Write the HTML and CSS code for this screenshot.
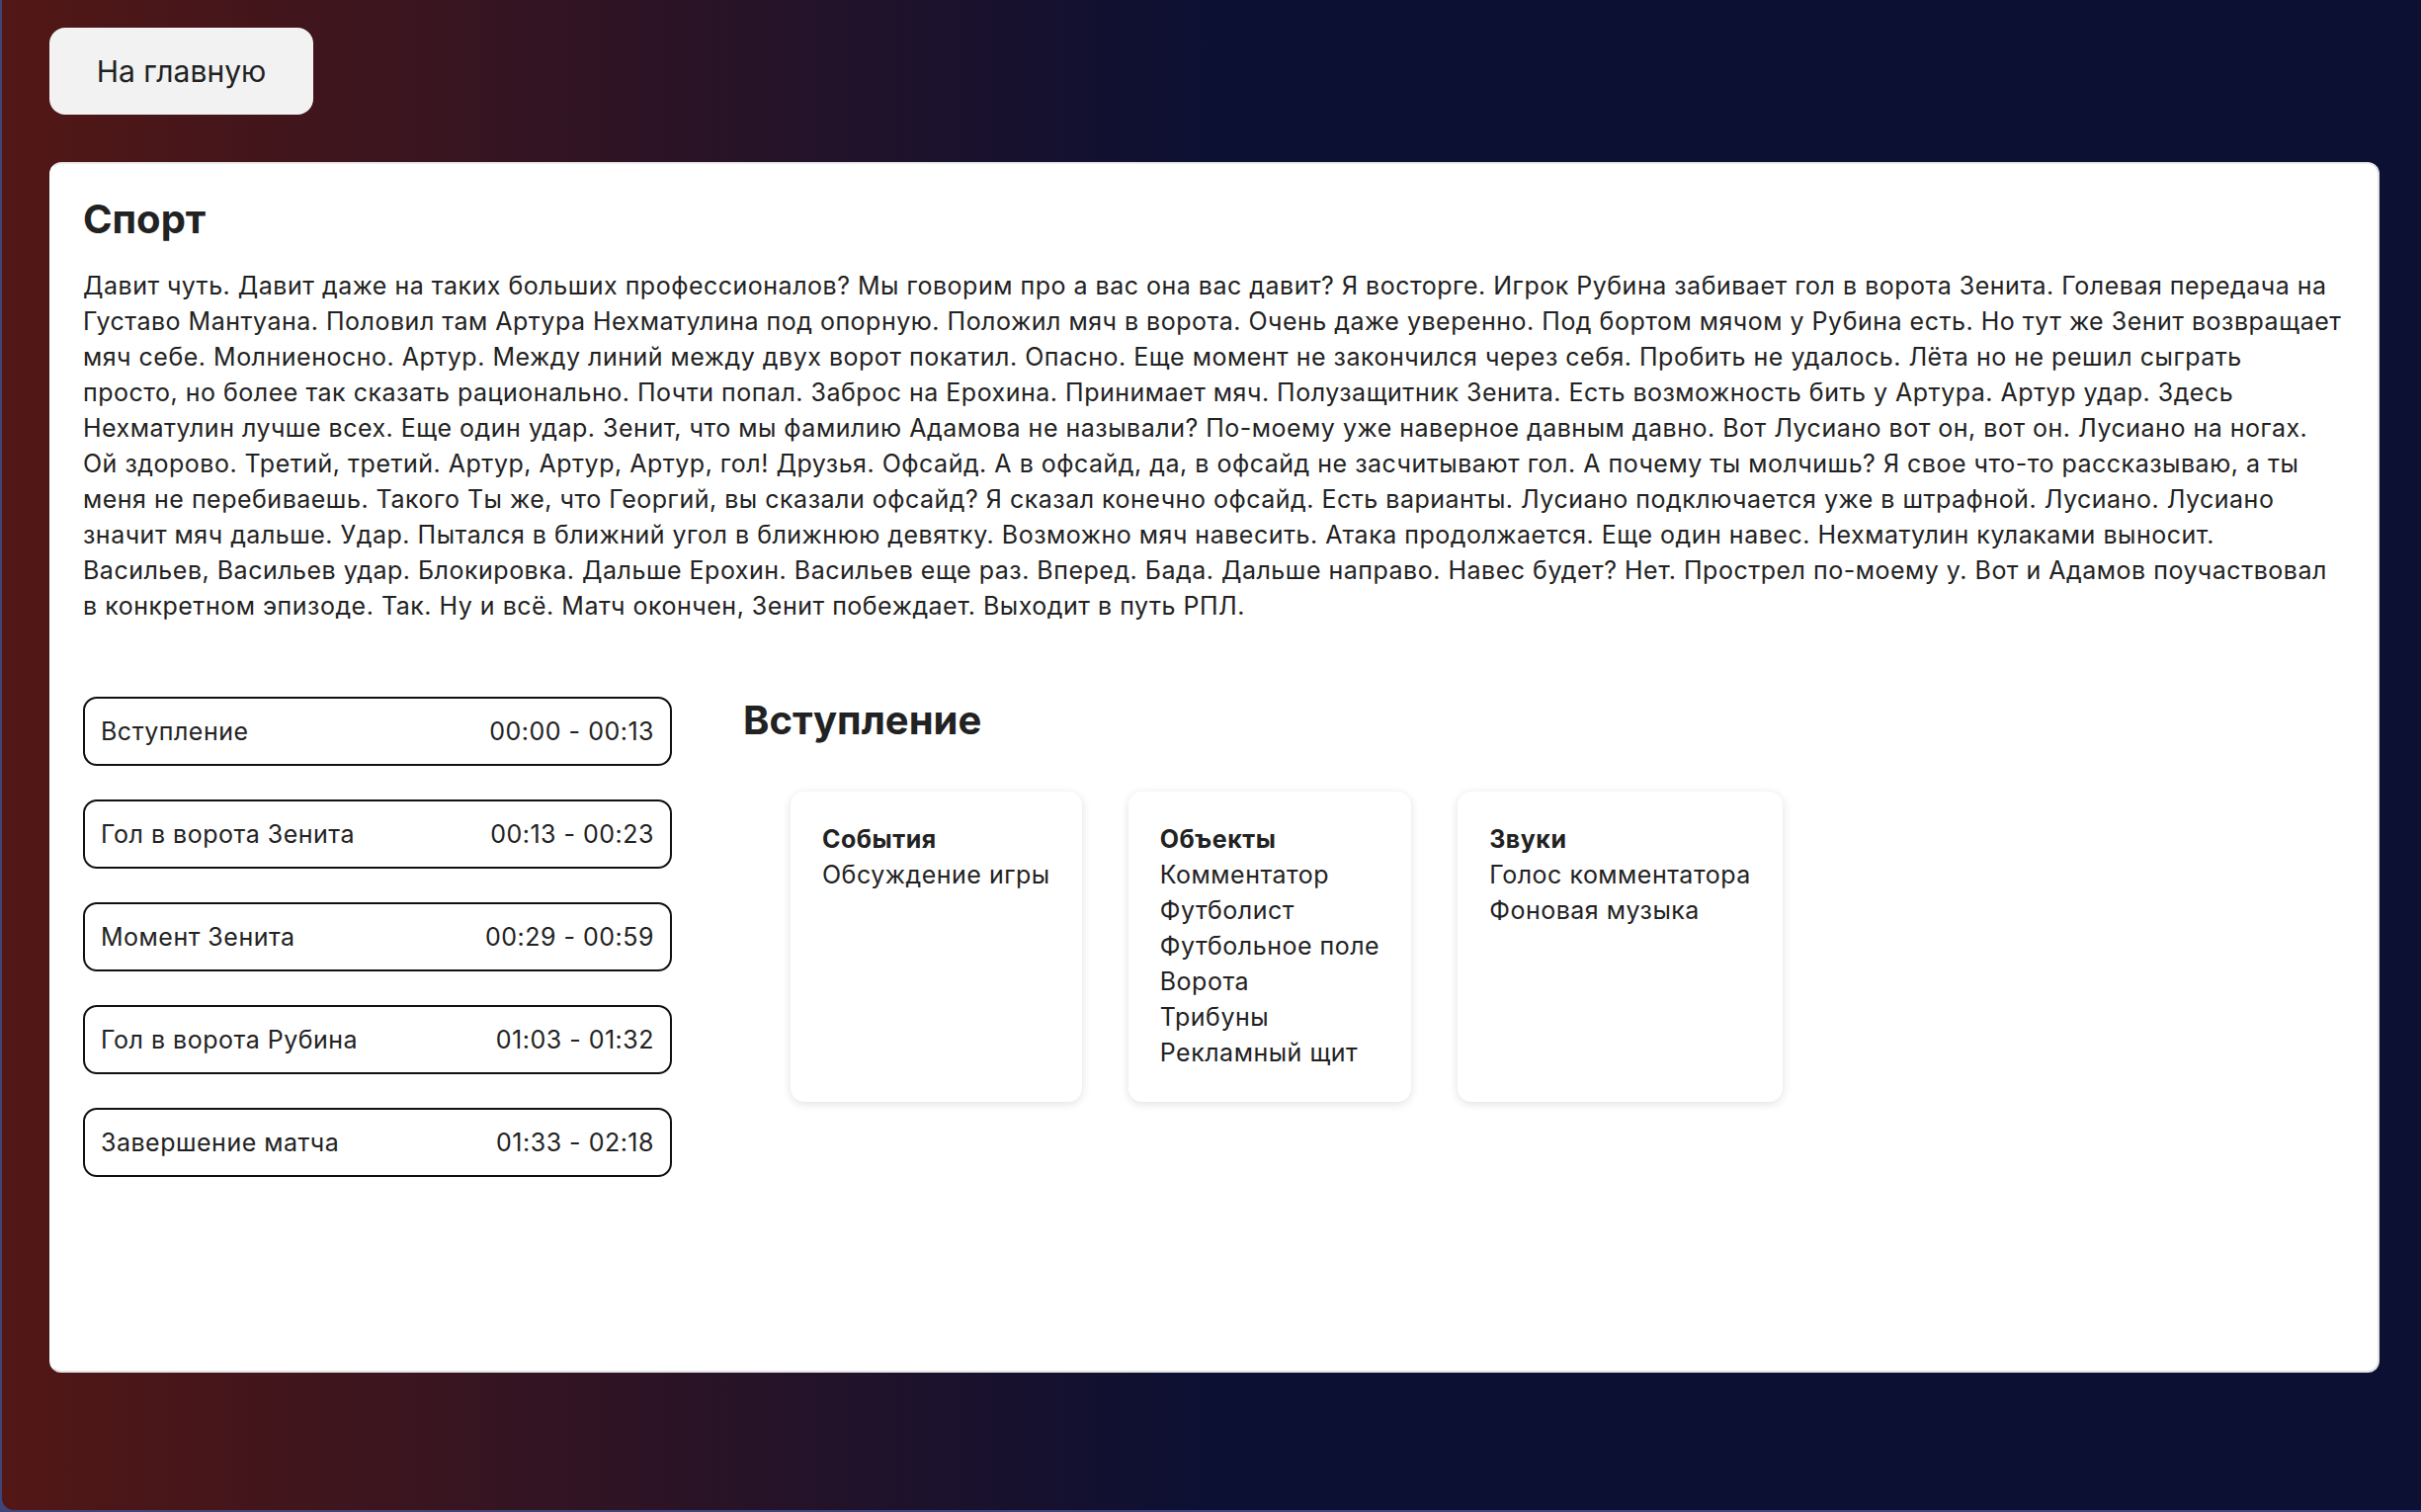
FILE: index.html
```html
<!DOCTYPE html>
<html lang="ru">
<head>
<meta charset="utf-8">
<title>Спорт</title>
<link rel="stylesheet" href="styles.css">
</head>
<body>
<div class="app">
  <button class="home-btn">На главную</button>
  <main class="card">
    <h1 class="title">Спорт</h1>
    <p class="transcript">Давит чуть. Давит даже на таких больших профессионалов? Мы говорим про а вас она вас давит? Я восторге. Игрок Рубина забивает гол в ворота Зенита. Голевая передача на Густаво Мантуана. Половил там Артура Нехматулина под опорную. Положил мяч в ворота. Очень даже уверенно. Под бортом мячом у Рубина есть. Но тут же Зенит возвращает мяч себе. Молниеносно. Артур. Между линий между двух ворот покатил. Опасно. Еще момент не закончился через себя. Пробить не удалось. Лёта но не решил сыграть просто, но более так сказать рационально. Почти попал. Заброс на Ерохина. Принимает мяч. Полузащитник Зенита. Есть возможность бить у Артура. Артур удар. Здесь Нехматулин лучше всех. Еще один удар. Зенит, что мы фамилию Адамова не называли? По-моему уже наверное давным давно. Вот Лусиано вот он, вот он. Лусиано на ногах. Ой здорово. Третий, третий. Артур, Артур, Артур, гол! Друзья. Офсайд. А в офсайд, да, в офсайд не засчитывают гол. А почему ты молчишь? Я свое что-то рассказываю, а ты меня не перебиваешь. Такого Ты же, что Георгий, вы сказали офсайд? Я сказал конечно офсайд. Есть варианты. Лусиано подключается уже в штрафной. Лусиано. Лусиано значит мяч дальше. Удар. Пытался в ближний угол в ближнюю девятку. Возможно мяч навесить. Атака продолжается. Еще один навес. Нехматулин кулаками выносит. Васильев, Васильев удар. Блокировка. Дальше Ерохин. Васильев еще раз. Вперед. Бада. Дальше направо. Навес будет? Нет. Прострел по-моему у. Вот и Адамов поучаствовал в конкретном эпизоде. Так. Ну и всё. Матч окончен, Зенит побеждает. Выходит в путь РПЛ.</p>
    <div class="details">
      <ul class="segments">
        <li class="segment"><span>Вступление</span><span>00:00 - 00:13</span></li>
        <li class="segment"><span>Гол в ворота Зенита</span><span>00:13 - 00:23</span></li>
        <li class="segment"><span>Момент Зенита</span><span>00:29 - 00:59</span></li>
        <li class="segment"><span>Гол в ворота Рубина</span><span>01:03 - 01:32</span></li>
        <li class="segment"><span>Завершение матча</span><span>01:33 - 02:18</span></li>
      </ul>
      <section class="segment-info">
        <h2 class="segment-title">Вступление</h2>
        <div class="tags">
          <div class="tag-card">
            <div class="tag-head">События</div>
            <div>Обсуждение игры</div>
          </div>
          <div class="tag-card">
            <div class="tag-head">Объекты</div>
            <div>Комментатор</div>
            <div>Футболист</div>
            <div>Футбольное поле</div>
            <div>Ворота</div>
            <div>Трибуны</div>
            <div>Рекламный щит</div>
          </div>
          <div class="tag-card">
            <div class="tag-head">Звуки</div>
            <div>Голос комментатора</div>
            <div>Фоновая музыка</div>
          </div>
        </div>
      </section>
    </div>
  </main>
</div>
</body>
</html>
```

FILE: styles.css
```css
* { box-sizing: border-box; }
html, body {
  margin: 0;
  padding: 0;
}
body {
  background: #3f4579;
  font-family: "Inter", "Noto Sans", sans-serif;
  color: #222;
}
.app {
  margin-left: 2px;
  height: 1528px;
  border-bottom-left-radius: 12px;
  background: linear-gradient(90deg, #521715 0%, #0c1033 50%, #0c1033 100%);
  padding: 28px 42px 0 48px;
  display: flex;
  flex-direction: column;
  align-items: flex-start;
}
.home-btn {
  width: 267px;
  height: 88px;
  border: none;
  border-radius: 16px;
  background: #f2f2f2;
  font-family: inherit;
  font-size: 30px;
  color: #222;
  padding: 0;
}
.card {
  margin-top: 48px;
  align-self: stretch;
  height: 1225px;
  background: #fff;
  border-radius: 12px;
  border: 2px solid #e4e4e4;
  border-top-color: #ececec;
  border-left-color: #fff;
  padding: 32px 32px;
}
.title {
  margin: 0;
  font-size: 40px;
  line-height: 48px;
  font-weight: 700;
  color: #222;
}
.transcript {
  margin: 25px 0 0;
  padding-right: 3px;
  font-size: 25px;
  line-height: 36px;
  letter-spacing: 0.5px;
  color: #222;
}
.details {
  margin-top: 74px;
  display: flex;
  align-items: flex-start;
  gap: 72px;
}
.segments {
  list-style: none;
  margin: 0;
  padding: 0;
  width: 596px;
  display: flex;
  flex-direction: column;
  gap: 34px;
}
.segment {
  height: 70px;
  border: 2px solid #111;
  border-radius: 14px;
  padding: 0 16px;
  display: flex;
  align-items: center;
  justify-content: space-between;
  font-size: 25px;
  letter-spacing: 0.5px;
  color: #222;
}
.segment-title {
  margin: 0;
  font-size: 40px;
  line-height: 48px;
  font-weight: 700;
  color: #222;
}
.tags {
  margin-top: 48px;
  padding-left: 48px;
  display: flex;
  gap: 47px;
  align-items: stretch;
}
.tag-card {
  background: #fff;
  border-radius: 14px;
  box-shadow: 0 2px 10px rgba(0, 0, 0, 0.12);
  padding: 30px 32px 32px;
  font-size: 25px;
  line-height: 36px;
  letter-spacing: 0.5px;
  color: #222;
}
.tag-head {
  font-weight: 700;
}
```
